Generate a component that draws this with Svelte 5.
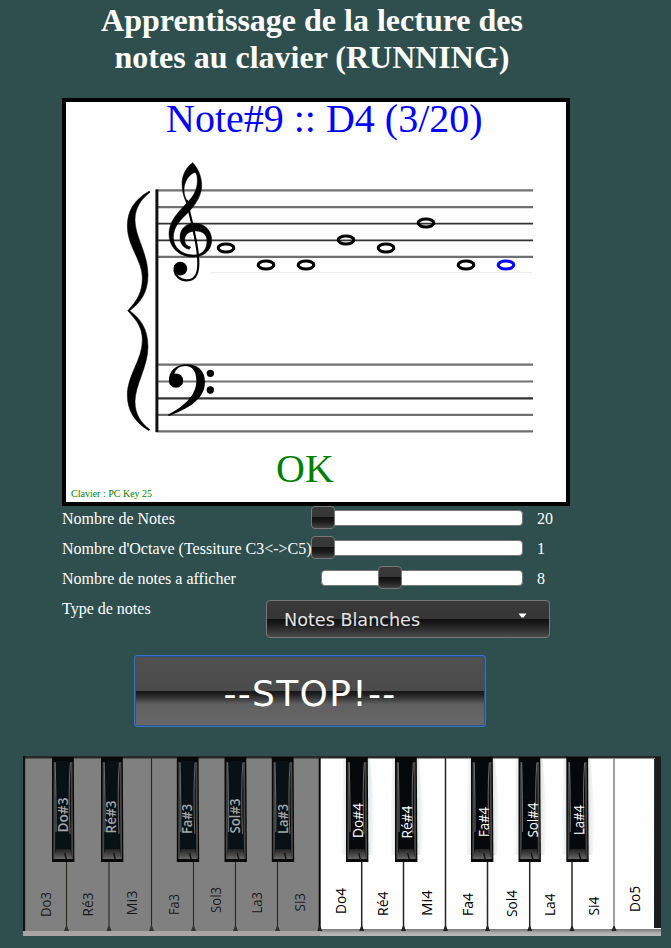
<script>
  const treble = [190.3, 207.2, 223.7, 240.3, 256.9];
  const bass = [364.7, 381.5, 398.3, 414.9, 431.4];
  const notes = [[226, 248], [266, 265], [306, 265], [346, 240], [386, 248], [426, 223], [466, 265], [506, 265]];
  const sliders = [
    { label: 'Nombre de Notes', value: 20, pos: -10 },
    { label: "Nombre d'Octave (Tessiture C3<->C5)", value: 1, pos: -10 },
    { label: 'Nombre de notes a afficher', value: 8, pos: 56.5 }
  ];
  const edges = [66.5, 109, 151.5, 193.5, 235.5, 277.5, 319.7, 361.7, 403.5, 445.5, 487.5, 529.7, 572, 614];
  const blacks = [52, 101, 176.8, 224.5, 271.8, 346, 395, 471, 518.5, 566.3];
  // name, baseline x, bottom y, text length
  const whiteLabels = [
    ['Do3', 51, 917, 25], ['Ré3', 93, 916.5, 24], ['Mi3', 137, 915.5, 25], ['Fa3', 178.6, 915, 21],
    ['Sol3', 221, 913, 26], ['La3', 262, 913.5, 21.5], ['Si3', 305, 911.5, 18.5],
    ['Do4', 345.7, 914, 26], ['Ré4', 387.7, 916, 24.5], ['Mi4', 432, 916, 26], ['Fa4', 473, 916, 23],
    ['Sol4', 516.7, 917, 27], ['La4', 555, 916, 22.5], ['Si4', 598.7, 915.5, 19], ['Do5', 640, 912, 26]
  ];
  const blackLabels = [
    ['Do#3', 67.7, 832.5, 35], ['Ré#3', 116.3, 833.5, 33], ['Fa#3', 192.3, 834, 30], ['Sol#3', 239.7, 833.5, 35],
    ['La#3', 288, 834, 30], ['Do#4', 363, 838, 35], ['Ré#4', 411.7, 838.5, 33], ['Fa#4', 489, 837, 30],
    ['Sol#4', 538.3, 837.5, 35], ['La#4', 584, 835, 30]
  ];
</script>

<main>
  <div class="panel">
    <h1>Apprentissage de la lecture des notes au clavier (RUNNING)</h1>

    <svg class="score" viewBox="66 102 500 400" width="500" height="400">
      <path d="M211 272.5H532" stroke="#ececec" />
      {#each [...treble, ...bass] as y, i}
        <path d="M156 {y}H533" stroke={i === 2 || i === 3 || i === 7 ? '#333' : '#707070'} stroke-width={i === 2 || i === 3 ? 1.8 : 2.2} />
      {/each}
      <path d="M156.9 189.5V432" stroke="#111" stroke-width="3" />
      <g transform="translate(110 150) scale(.33333)">
        <path d="M118 123C75 148 52 180 52 228C52 290 97 330 97 385C97 425 82 452 53 482C82 512 97 535 97 570C97 630 52 675 52 735C52 782 75 818 117 842L119 838C95 820 75 795 75 755C75 705 114 650 114 590C114 535 90 505 59 482C90 459 114 430 114 375C114 310 75 260 75 210C75 172 95 147 120 127Z" stroke="#000" stroke-width="1.5" />
        <path fill-rule="evenodd" stroke="#000" stroke-width="1.5" d="M248 38C262 52 277 80 275 112C272 140 258 162 236 186C214 208 190 228 190 262C190 292 215 315 250 315C280 315 291 295 291 272C291 254 277 243 258 243C235 243 224 255 224 270C224 280 230 288 242 291L238 298C220 295 210 280 210 262C210 235 230 220 254 220C284 220 305 242 305 270C305 300 283 321 248 321C208 321 177 292 177 252C177 218 200 190 230 160C220 140 216 120 216 100C216 75 230 50 248 38ZM234 155C252 138 263 115 262 90C262 75 258 65 252 68C237 74 222 95 222 120C222 135 227 147 234 155Z" />
        <path d="M230 150C240 200 261 270 264 320C268 365 260 391 230 391C210 391 196 378 193 360" fill="none" stroke="#000" stroke-width="6.5" />
        <circle cx="211" cy="356" r="20.5" />
      </g>
      <g transform="translate(110 290) scale(.33333)">
        <circle cx="198" cy="272" r="21.5" />
        <path d="M177 270C177 242 200 223 230 223C262 223 285 242 285 275C285 330 230 357 176 378L174 374C225 347 259 315 259 272C259 245 248 228 226 228C205 228 194 240 192 258Z" />
        <circle cx="301" cy="250" r="11" />
        <circle cx="301" cy="300" r="11" />
      </g>
      {#each notes as [x, y], i}
        <ellipse cx={x} cy={y} rx="7.8" ry="4" fill="none" stroke={i === 7 ? '#00f' : '#000'} stroke-width="3.1" />
      {/each}
      <text x="166" y="132" font-size="40" fill="#00f">Note#9 :: D4 (3/20)</text>
      <text x="276" y="482" font-size="40" fill="green">OK</text>
      <text x="71" y="497" font-size="10" fill="green">Clavier : PC Key 25</text>
    </svg>

    {#each sliders as s}
      <div class="row">
        <span class="label">{s.label}</span>
        <div class="track"><div class="handle" style="margin-left: {s.pos}px"></div></div>
        <span class="value">{s.value}</span>
      </div>
    {/each}
    <div class="row type">
      <span class="label">Type de notes</span>
      <div class="select">
        <span>Notes Blanches</span>
        <svg width="9" height="5" viewBox="0 0 9 5"><path d="M.5 .5H8.5L5.5 4.5H3.5Z" fill="#fff" /></svg>
      </div>
    </div>
    <button>--STOP!--</button>
  </div>

  <svg class="piano" viewBox="23 756 638 180" width="638" height="180">
    <defs>
      <linearGradient id="ledge" x1="0" y1="0" x2="0" y2="1">
        <stop offset="0" stop-color="#777" /><stop offset=".5" stop-color="#aaa" /><stop offset="1" stop-color="#bbb" />
      </linearGradient>
      <linearGradient id="shade">
        <stop offset="0" stop-color="#c4d0d4" stop-opacity="0" /><stop offset="1" stop-color="#b4c0c4" stop-opacity=".35" />
      </linearGradient>
      <linearGradient id="shadeR">
        <stop offset="0" stop-color="#b4c0c4" stop-opacity=".45" /><stop offset="1" stop-color="#c4d0d4" stop-opacity="0" />
      </linearGradient>
      <linearGradient id="lip" x1="0" y1="0" x2="0" y2="1">
        <stop offset="0" stop-color="#222" /><stop offset="1" stop-color="#666" />
      </linearGradient>
    </defs>
    <rect x="23" y="756" width="638" height="180" fill="#fefefe" />
    <rect x="320" y="929" width="341" height="7" fill="url(#ledge)" />
    <rect x="23" y="756" width="297" height="175" fill="#808080" />
    <rect x="23" y="931" width="297" height="5" fill="#aaa5a5" />
    <rect x="23" y="756" width="638" height="2.5" fill="#2b2928" />
    <rect x="23" y="756" width="2.2" height="175" fill="#111" />
    <path d="M655 757H661V928H654Z" fill="#1c1c1c" />
    <path d="M654.7 759V928" stroke="#17202a" stroke-width="1.2" />
    {#each edges as x, i}
      <path d="M{x} 758V930" stroke={i === 13 ? '#85827f' : i === 6 ? '#080808' : '#29261f'} stroke-width={i === 6 ? 2 : i > 6 ? 1.5 : 1.1} />
      <path d="M{x - 2.5} 931L{x - .6} 926H{x + .6}L{x + 2.5} 931Z" fill={i > 5 ? '#222' : '#333'} />
    {/each}
    {#each blacks as x, i}
      {#if i > 4}
        <path d="M{x - 3} 759H{x}V855H{x - 5}Z" fill="url(#shade)" />
        <path d="M{x + 22} 759H{x + 24}L{x + 29} 820L{x + 26} 855H{x + 22}Z" fill="url(#shadeR)" />
      {/if}
      <g transform="translate({x} 757)">
        <path d="M0 0H21.8L22.4 105H0Z" fill="#080808" />
        <path d="M4 4H17L19 96H3Z" fill={i > 4 ? '#06090b' : '#081216'} />
        <path d="M2.6 5L2.2 101H20.3L19.5 5" fill="none" stroke="#464543" stroke-width="1.8" />
        <path d="M3.2 5.5Q4.3 45 4 75M18.3 5.5Q16.2 35 18 77" fill="none" stroke={i > 4 ? '#767676' : '#737478'} stroke-width=".9" />
        <path d="M4 92H18.5L20 102H2Z" fill="url(#lip)" />
        <path d="M12.7 96L14.5 103" stroke="#111" stroke-width="1.3" />
      </g>
    {/each}
    {#each whiteLabels as [name, x, y, len], i}
      <text class="key" class:light={i < 7} transform="translate({x} {y}) rotate(-90)" textLength={len} lengthAdjust="spacingAndGlyphs" fill="#000">{name}</text>
    {/each}
    {#each blackLabels as [name, x, y, len], i}
      <text class="key" class:strong={i < 5} transform="translate({x} {y}) rotate(-90)" textLength={len} lengthAdjust="spacingAndGlyphs" fill={i < 5 ? '#a4a4a4' : '#fff'}>{name}</text>
    {/each}
  </svg>
</main>

<style>
  :global(body) { background: #2f4f4f; }
  main {
    box-sizing: border-box;
    width: 671px;
    height: 948px;
    padding-top: 2px;
    background: #2f4f4f;
    color: #fff;
    font: 16px/18px "Liberation Serif", "Times New Roman", serif;
  }
  .panel { width: 500px; margin-left: 62px; }
  h1 { margin: 0 0 22px; font-size: 32px; line-height: 37px; text-align: center; }
  .score { display: block; border: 4px solid #000; background: #fff; overflow: visible; }
  .score text { font-family: "Liberation Serif", serif; }
  .row { display: flex; height: 30px; align-items: flex-start; }
  .label { width: 259px; padding-top: 4px; white-space: nowrap; }
  .track {
    box-sizing: border-box;
    flex: none;
    width: 202px;
    height: 16px;
    margin-top: 4px;
    border: 1px solid #777;
    border-radius: 4px;
    background: #fff;
  }
  .handle {
    box-sizing: border-box;
    width: 24px;
    height: 23px;
    margin-top: -5px;
    border: 1px solid #777;
    border-radius: 4px;
    background: linear-gradient(#3a3a3a, #353535 49%, #111 50%, #1b1b1b 70%, #444);
    transform: translateX(-1px);
  }
  .value { margin-left: 14px; padding-top: 4px; }
  .type { height: 59px; padding-right: 12px; }
  .type .label { width: 204px; }
  .select {
    box-sizing: border-box;
    display: flex;
    flex: none;
    justify-content: space-between;
    align-items: flex-start;
    width: 284px;
    height: 38px;
    margin-top: 4px;
    padding: 10px 22px 0 17px;
    border: 1px solid #777;
    border-radius: 4px;
    background: linear-gradient(#3a3a3a, #353535 50%, #101010 50%, #191919 62%, #4b4b4b);
    color: #e3e3e3;
    font: 17.6px/18px "DejaVu Sans", sans-serif;
    white-space: nowrap;
  }
  .select svg { margin-top: 2px; }
  button {
    display: block;
    box-sizing: border-box;
    width: 352px;
    height: 72px;
    margin: 0 0 0 72px;
    padding: 6px 0 0;
    border: 1px solid #3b73c3;
    border-radius: 3px;
    box-shadow: inset 0 0 0 1px #29518b;
    background: linear-gradient(#505050, #4b4b4b 50%, #151515 50%, #202020 55%, #606060 69%, #686868);
    color: #fff;
    font: 36px/42px "DejaVu Sans", sans-serif;
    letter-spacing: 1.3px;
  }
  .piano { display: block; margin: 29px 0 0 23px; }
  .key { font: 14px "Open Sans", "Noto Sans", sans-serif; }
  .light { font-weight: 400; fill-opacity: .82; }
  .strong { font-weight: 600; }
</style>
